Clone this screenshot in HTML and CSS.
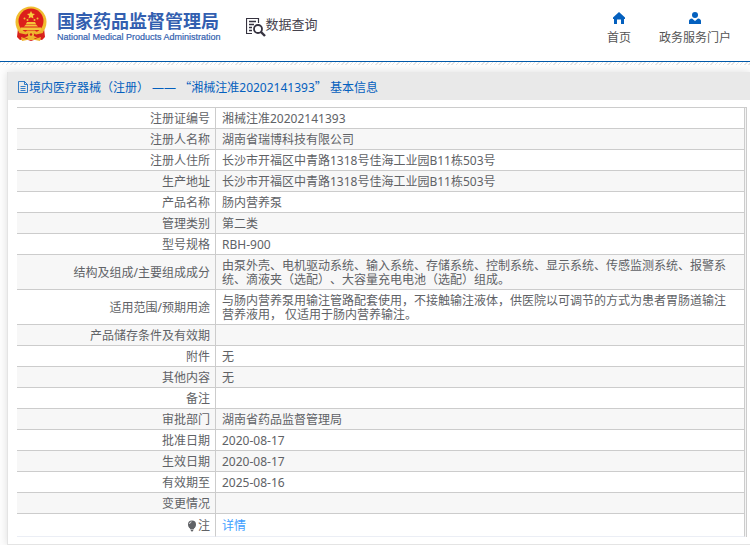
FILE: index.html
```
<!DOCTYPE html>
<html lang="zh-CN">
<head>
<meta charset="utf-8">
<title>国家药品监督管理局 数据查询</title>
<link rel="stylesheet" href="styles.css">
</head>
<body>
<header class="header">
  <div class="brand">
    <svg class="emblem" viewBox="0 0 32 36" aria-hidden="true">
      <path d="M3 22L2 31l3 3 5-1 6 2 6-2 5 1 3-3-1-9z" fill="#d9201c"/>
      <circle cx="16" cy="16" r="15.500" fill="#f0bd30"/>
      <circle cx="16" cy="15" r="12.500" fill="#dc1f1b"/>
      <path d="M16 5l1.200 2.600 2.800.3-2.100 1.900.6 2.800-2.500-1.400-2.500 1.400.6-2.800L12 7.900l2.800-.3z" fill="#f7cf3d"/>
      <g fill="#f2bf35"><circle cx="9.500" cy="12.500" r="1"/><circle cx="12.500" cy="14" r="1"/><circle cx="19.500" cy="14" r="1"/><circle cx="22.500" cy="12.500" r="1"/></g>
      <path d="M11 18l1-2h8l1 2zM9 20.500l2-2h10l2 2zM6 24v-2.500h20V24z" fill="#f5c43a"/>
      <path d="M3 23c5 4 8 3 9 1.500h8c1 1.500 4 2.500 9-1.500l-2 6-6 3h-10l-6-3z" fill="#efb32d"/>
      <path d="M4 27l7 1.500 2-1h6l2 1 7-1.500-1 3-5 1.500-3-1.500h-6l-3 1.500L5 30z" fill="#d3201b"/>
      <circle cx="16" cy="28.500" r="3" fill="#f0b833"/><circle cx="16" cy="28.500" r="1.200" fill="#d3201b"/>
      <path d="M6 31l6 2 2-2h4l2 2 6-2-1 4-5-1h-8l-5 1z" fill="#efb32d"/>
    </svg>
    <div class="brand-text">
      <span class="brand-cn">国家药品监督管理局</span>
      <span class="brand-en">National Medical Products Administration</span>
    </div>
  </div>
  <div class="section-name">
    <svg class="query-icon" viewBox="0 0 20 20" fill="none" stroke="#35323f" aria-hidden="true">
      <path d="M12.500 6V1.500h-12v15H6" stroke-width="1.200"/>
      <path d="M3 4.500h7M3 7.500h5M3 10.500h3M3 13.500h3" stroke-width="1.400"/>
      <circle cx="12" cy="12" r="4" stroke-width="1.800"/>
      <path d="M15 15l4 4" stroke-width="2.400"/>
    </svg>
    <span>数据查询</span>
  </div>
  <nav class="nav">
    <a href="#">
      <svg viewBox="0 0 12 12" aria-hidden="true"><path d="M6 0L0 5.500V7h1v5h3V7.500h4V12h3V7h1V5.500z"/></svg>
      <span>首页</span>
    </a>
    <a href="#">
      <svg viewBox="0 0 12 12" aria-hidden="true"><circle cx="6" cy="3" r="3"/><path d="M0 12V9q0-2 3-2.500L6 9l3-2.500q3 .5 3 2.500v3z"/></svg>
      <span>政务服务门户</span>
    </a>
  </nav>
</header>
<main class="panel">
  <h1 class="panel-title">
    <svg viewBox="0 0 10 12" fill="none" stroke="currentColor" stroke-width=".8" aria-hidden="true"><path d="M.5.500h6l3 3v8h-9zM6.500.500v3h3M2.500 5.500h5M2.500 7.500h5M2.500 9.500h5"/></svg>
    <span>境内医疗器械（注册） —— <span class="quote">“</span>湘械注准20202141393<span class="quote">”</span> 基本信息</span>
  </h1>
  <div class="panel-body">
    <table class="info">
      <tbody>
        <tr><th scope="row">注册证编号</th><td>湘械注准20202141393</td></tr>
        <tr><th scope="row">注册人名称</th><td>湖南省瑞博科技有限公司</td></tr>
        <tr><th scope="row">注册人住所</th><td>长沙市开福区中青路1318号佳海工业园B11栋503号</td></tr>
        <tr><th scope="row">生产地址</th><td>长沙市开福区中青路1318号佳海工业园B11栋503号</td></tr>
        <tr><th scope="row">产品名称</th><td>肠内营养泵</td></tr>
        <tr><th scope="row">管理类别</th><td>第二类</td></tr>
        <tr><th scope="row">型号规格</th><td>RBH-900</td></tr>
        <tr><th scope="row">结构及组成/主要组成成分</th><td>由泵外壳、电机驱动系统、输入系统、存储系统、控制系统、显示系统、传感监测系统、报警系统、滴液夹（选配）、大容量充电电池（选配）组成。</td></tr>
        <tr><th scope="row">适用范围/预期用途</th><td>与肠内营养泵用输注管路配套使用，不接触输注液体，供医院以可调节的方式为患者胃肠道输注营养液用， 仅适用于肠内营养输注。</td></tr>
        <tr><th scope="row">产品储存条件及有效期</th><td></td></tr>
        <tr><th scope="row">附件</th><td>无</td></tr>
        <tr><th scope="row">其他内容</th><td>无</td></tr>
        <tr><th scope="row">备注</th><td></td></tr>
        <tr><th scope="row">审批部门</th><td>湖南省药品监督管理局</td></tr>
        <tr><th scope="row">批准日期</th><td>2020-08-17</td></tr>
        <tr><th scope="row">生效日期</th><td>2020-08-17</td></tr>
        <tr><th scope="row">有效期至</th><td>2025-08-16</td></tr>
        <tr><th scope="row">变更情况</th><td></td></tr>
        <tr class="note"><th scope="row"><svg viewBox="0 0 10 12" aria-hidden="true"><circle cx="5" cy="4.500" r="4"/><path d="M2 7h6l-1.500 2.500h-3zM3.500 10h3L5.500 11.500h-1z"/><path d="M2.500 4q.3-2 2-2.200" fill="none" stroke="#fff" stroke-width=".8"/></svg>注</th><td><a href="#">详情</a></td></tr>
      </tbody>
    </table>
  </div>
</main>
</body>
</html>
```
FILE: styles.css
```
* { box-sizing: border-box; }
body {
  margin: 0;
  background: #fdfdfd;
  color: #606266;
  font: 12px/14px "Noto Sans", "Noto Sans CJK SC", sans-serif;
  text-spacing-trim: space-all;
  overflow-x: hidden;
}
a { text-decoration: none; }
svg { display: block; }

.header {
  display: flex;
  align-items: flex-start;
  height: 65px;
  padding: 6px 19px 0 15px;
  background:
    linear-gradient(#0058a9, #0058a9) 0 61px / 100% 1px no-repeat,
    repeating-linear-gradient(135deg, #e4e4e4 0 1px, #fff 1px 3px) 0 62px / 100% 3px no-repeat,
    #fff;
}
.brand { display: flex; gap: 10px; }
.emblem { width: 32px; height: 36px; }
.brand-text { display: flex; flex-direction: column; padding-top: 3px; white-space: nowrap; color: #335fb0; }
.brand-cn { font: bold 18px/22px "Noto Sans CJK SC", sans-serif; }
.brand-en { font: 9px/12px "Liberation Sans", sans-serif; -webkit-text-stroke: .2px; }
.section-name {
  display: flex;
  margin: 8px 0 0 25px;
  color: #45424d;
  font: 13px/20px "Noto Sans CJK SC", sans-serif;
  white-space: nowrap;
}
.query-icon { width: 20px; height: 20px; margin-top: 3px; }
.nav { display: flex; gap: 28px; margin: 6px 0 0 auto; }
.nav a { display: flex; flex-direction: column; align-items: center; gap: 7px; color: #555; }
.nav svg { width: 12px; height: 12px; fill: #0460be; }

.panel {
  margin: 7px 0 0 7px;
  border: solid #e4e4e4;
  border-width: 0 0 1px 1px;
  background: #fff;
  box-shadow: 0 0 8px rgba(0, 0, 0, .12);
}
.panel-title {
  display: flex;
  align-items: center;
  gap: 1px;
  margin: 0;
  height: 28px;
  padding: 2px 0 0 10px;
  background: #e9e9e9;
  color: #0460be;
  font-size: 12px;
  font-weight: 400;
}
.panel-title svg { width: 10px; height: 12px; }
.quote { font-family: "Noto Sans CJK SC", sans-serif; }
.panel-body { padding: 7px 3px 7px 9px; }
.info {
  width: 100%;
  border-collapse: separate;
  border-spacing: 0;
  border: solid #ccc;
  border-width: 1px 1px 0 0;
  padding-right: 1px;
  background: #f4f4f4;
}
.info tr { background: #fff; }
.info tr:nth-child(even) { background: #f7f7f7; }
.info th, .info td {
  height: 21px;
  padding: 4px 12px 2px 6px;
  border: solid #ccc;
  border-width: 0 1px 1px 0;
  font-weight: 400;
  text-align: left;
}
.info th { width: 199px; padding-right: 5px; text-align: right; }
.info .note th, .info .note td { height: 23px; border-bottom-color: #ebeef5; }
.note svg { display: inline-block; width: 10px; height: 12px; margin-right: 1px; vertical-align: -2px; fill: #606266; }
.note a { color: #409eff; }
```
